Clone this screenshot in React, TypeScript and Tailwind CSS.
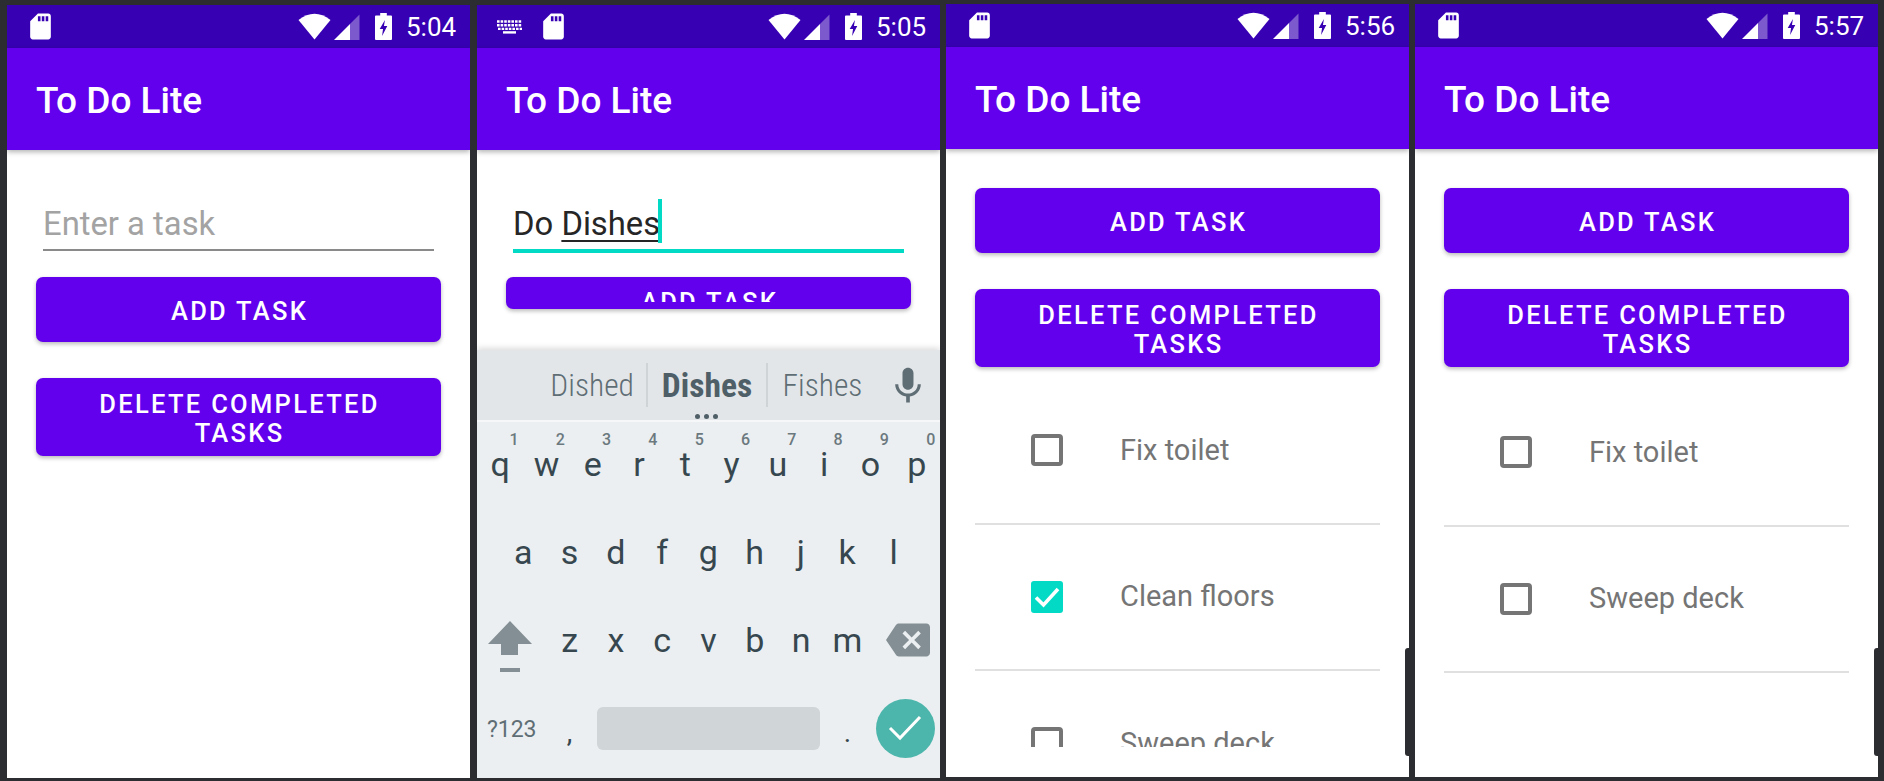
import React from "react";

function SdIcon() {
  return (
    <svg width="31" height="31" viewBox="0 0 24 24" fill="white">
      <path d="M18 2h-8L4.02 8 4 20c0 1.1.9 2 2 2h12c1.1 0 2-.9 2-2V4c0-1.1-.9-2-2-2zm-6 6h-2V4h2v4zm3 0h-2V4h2v4zm3 0h-2V4h2v4z" />
    </svg>
  );
}

function KeyboardIcon() {
  return (
    <svg width="26" height="14" viewBox="0 0 26 14" fill="none" stroke="white" strokeWidth="2.4">
      <path d="M0 1.5H25" strokeDasharray="2.6 1" />
      <path d="M0 5.2H25" strokeDasharray="2.6 1" />
      <path d="M1 8.9H25" strokeDasharray="2.6 1" />
      <path d="M6 12.4H19" />
    </svg>
  );
}

function StatusBar({ time, keyboard }: { time: string; keyboard?: boolean }) {
  return (
    <div className="flex h-[43px] shrink-0 items-center bg-[#3700b3] text-white">
      {keyboard ? (
        <div className="ml-[20px] mr-[15px]">
          <KeyboardIcon />
        </div>
      ) : (
        <div className="w-[18px]" />
      )}
      <SdIcon />
      <div className="flex-1" />
      <svg width="33" height="27" viewBox="0 0 33 27" fill="white">
        <path d="M16.5 26.5 L0.5 7 Q16.5 -5.5 32.5 7 Z" />
      </svg>
      <svg className="ml-[3px]" width="26" height="26" viewBox="0 0 26 26">
        <path d="M0 26 L16 10 V26 Z" fill="white" />
        <path d="M16 10 L25.5 0.5 V26 H16 Z" fill="white" opacity="0.35" />
      </svg>
      <svg className="ml-[15px]" width="17" height="27" viewBox="0 0 18 27" preserveAspectRatio="none">
        <path d="M5.5 0h7v2.5H17a1 1 0 0 1 1 1V26a1 1 0 0 1-1 1H1a1 1 0 0 1-1-1V3.5a1 1 0 0 1 1-1h4.5z" fill="white" />
        <path d="M10.5 7 L5 16 H8.5 L7.5 23 L13 13 H9.5 Z" fill="#3700b3" />
      </svg>
      <span className="ml-[14px] mr-[15px] w-[49px] text-[26px] leading-none whitespace-nowrap">{time}</span>
    </div>
  );
}

function AppBar() {
  return (
    <div className="relative z-10 flex h-[102px] shrink-0 items-center bg-[#6200ee] pl-[29px] pt-[4px] text-[37px] font-medium text-white shadow-[0_2px_5px_rgba(0,0,0,0.3)]">
      To Do Lite
    </div>
  );
}

function PurpleButton({ children }: { children: React.ReactNode }) {
  return (
    <div className="flex min-h-[65px] items-center justify-center rounded-[7px] bg-[#6200ee] pt-[12px] pr-[39px] pb-[8px] pl-[41px] text-center text-[25.5px] leading-[29px] font-medium tracking-[0.09em] text-white shadow-[0_2px_4px_rgba(0,0,0,0.28)]">
      {children}
    </div>
  );
}

function TaskRow({ label, done }: { label: string; done?: boolean }) {
  return (
    <div className="flex h-[146.5px] shrink-0 items-center border-b-2 border-[#e0e0e0] pl-[56px]">
      {done ? (
        <div className="flex h-[32px] w-[32px] items-center justify-center rounded-[3px] bg-[#03dac5]">
          <svg width="26" height="22" viewBox="0 0 26 22" fill="none" stroke="white" strokeWidth="3.6">
            <path d="M2 11.5 L9.5 19 L24 3" />
          </svg>
        </div>
      ) : (
        <div className="h-[32px] w-[32px] rounded-[4px] border-4 border-[#757575]" />
      )}
      <span className="ml-[57px] text-[29px] text-[#757575]">{label}</span>
    </div>
  );
}

const Row1 = ["q", "w", "e", "r", "t", "y", "u", "i", "o", "p"];
const Hints = ["1", "2", "3", "4", "5", "6", "7", "8", "9", "0"];
const Row2 = ["a", "s", "d", "f", "g", "h", "j", "k", "l"];
const Row3 = ["z", "x", "c", "v", "b", "n", "m"];

function Key({ label, hint }: { label: string; hint?: string }) {
  return (
    <div className="relative flex h-[88px] w-[46.3px] shrink-0 items-center justify-center text-[34px] text-[#37474f]">
      {hint && (
        <span className="absolute top-[12px] left-[32px] w-[10px] text-center text-[16px] leading-4 font-medium text-[#6b797f]">
          {hint}
        </span>
      )}
      {label}
    </div>
  );
}

function Keyboard() {
  return (
    <div className="relative z-10 h-[428px] shrink-0 bg-[#eceff1] shadow-[0_-2px_6px_rgba(0,0,0,0.14)]">
      <div className="relative flex h-[72px] items-center border-b-2 border-[#f6f7f8] bg-[#e3e6e9] text-[33.5px] text-[#5f6e75]">
        <div className="flex h-[44px] w-[171px] items-center justify-end border-r-2 border-[#cfd4d7] pr-[12px]">
          <span className="inline-block pt-[2px] text-[31.5px] font-light [font-stretch:75%]">Dished</span>
        </div>
        <div className="flex h-[44px] w-[120px] items-center justify-center border-r-2 border-[#cfd4d7] font-bold text-[#4f5f67]">
          <span className="inline-block pt-[2px] [font-stretch:75%]">Dishes</span>
        </div>
        <div className="flex h-[44px] w-[115px] items-center justify-center">
          <span className="inline-block pt-[2px] pr-[6px] text-[31.5px] font-light [font-stretch:75%]">Fishes</span>
        </div>
        <svg className="ml-[3px] mt-[1px]" width="44" height="44" viewBox="0 0 24 24" fill="#5f6e75">
          <path d="M12 14c1.66 0 2.99-1.34 2.99-3L15 5c0-1.66-1.34-3-3-3S9 3.34 9 5v6c0 1.66 1.34 3 3 3zm5.3-3c0 3-2.54 5.1-5.3 5.1S6.7 14 6.7 11H5c0 3.41 2.72 6.23 6 6.72V21h2v-3.28c3.28-.48 6-3.3 6-6.72h-1.7z" />
        </svg>
        <div className="absolute bottom-[1px] left-[218px] flex gap-[4px]">
          <div className="h-[5px] w-[5px] rounded-full bg-[#4f5f67]" />
          <div className="h-[5px] w-[5px] rounded-full bg-[#4f5f67]" />
          <div className="h-[5px] w-[5px] rounded-full bg-[#4f5f67]" />
        </div>
      </div>
      <div className="mt-[-2px] flex">
        {Row1.map((k, i) => (
          <Key key={k} label={k} hint={Hints[i]} />
        ))}
      </div>
      <div className="flex pl-[23px]">
        {Row2.map((k) => (
          <Key key={k} label={k} />
        ))}
      </div>
      <div className="flex">
        <div className="flex h-[88px] w-[69.45px] shrink-0 flex-col items-center justify-center gap-[12px] pt-[12px] pr-[4px]">
          <svg width="44" height="35" viewBox="0 0 44 35" fill="#838f94">
            <path d="M22 0 L44 23 H30 V34 H13 V23 H0 Z" />
          </svg>
          <div className="h-[4px] w-[20px] bg-[#838f94]" />
        </div>
        {Row3.map((k) => (
          <Key key={k} label={k} />
        ))}
        <div className="flex h-[88px] w-[69.45px] shrink-0 items-center justify-center">
          <svg className="ml-[6px]" width="44" height="44" viewBox="0 0 24 24" fill="#838f94">
            <path d="M22 3H7c-.69 0-1.23.35-1.59.88L0 12l5.41 8.11c.36.53.9.89 1.59.89h15c1.1 0 2-.9 2-2V5c0-1.1-.9-2-2-2zm-3 12.59L17.59 17 14 13.41 10.41 17 9 15.59 12.59 12 9 8.41 10.41 7 14 10.59 17.59 7 19 8.41 15.41 12 19 15.59z" />
          </svg>
        </div>
      </div>
      <div className="flex h-[88px] items-center text-[#5f6e75]">
        <div className="w-[69.45px] shrink-0 pt-[4px] text-center text-[23px]">?123</div>
        <div className="w-[46.3px] shrink-0 pt-[10px] text-center text-[28px] text-[#37474f]">,</div>
        <div className="mx-[4px] h-[43px] w-[223.5px] shrink-0 rounded-[6px] bg-[#d0d5d8]" />
        <div className="w-[46.3px] shrink-0 pt-[10px] text-center text-[28px] text-[#37474f]">.</div>
        <div className="flex w-[69.45px] shrink-0 justify-center">
          <div className="flex h-[59px] w-[59px] items-center justify-center rounded-full bg-[#4db6ac]">
            <svg width="34" height="26" viewBox="0 0 34 26" fill="none" stroke="white" strokeWidth="3">
              <path d="M2 13 L12 23 L32 2" />
            </svg>
          </div>
        </div>
      </div>
    </div>
  );
}

function FirstPhone() {
  return (
    <div className="ml-[7px] mt-[5px] flex h-[773px] w-[463px] flex-col overflow-hidden bg-white">
      <StatusBar time="5:04" />
      <AppBar />
      <div className="px-[29px] pt-[46px]">
        <div className="mx-[7px] h-[55px] border-b-2 border-[#8a8a8a] text-[32.8px] leading-[57px] text-[#a3a3a3]">
          Enter a task
        </div>
        <div className="mt-[26px]">
          <PurpleButton>ADD TASK</PurpleButton>
        </div>
        <div className="mt-[36px]">
          <PurpleButton>DELETE COMPLETED TASKS</PurpleButton>
        </div>
      </div>
    </div>
  );
}

function SecondPhone() {
  return (
    <div className="ml-[7px] mt-[5px] flex h-[773px] w-[463px] flex-col overflow-hidden bg-white">
      <StatusBar time="5:05" keyboard />
      <AppBar />
      <div className="flex-1 px-[29px] pt-[46px]">
        <div className="relative mx-[7px] h-[57px] border-b-4 border-[#03dac5] text-[32.8px] leading-[57px] text-[#262626]">
          Do <span className="underline decoration-2 underline-offset-[5px]">Dishes</span>
          <span className="absolute top-[3px] left-[145px] h-[44px] w-[4px] bg-[#03dac5]" />
        </div>
        <div className="mt-[24px] h-[32px] rounded-[7px] bg-[#6200ee] pl-[2px] text-center text-[25.5px] font-medium tracking-[0.09em] text-white shadow-[0_2px_4px_rgba(0,0,0,0.28)]">
          <div className="h-[25px] overflow-hidden pt-[11px] leading-[29px]">ADD TASK</div>
        </div>
      </div>
      <Keyboard />
    </div>
  );
}

function ThirdPhone() {
  return (
    <div className="relative ml-[6px] mt-[4px] flex h-[773px] w-[463px] flex-col overflow-hidden bg-white">
      <StatusBar time="5:56" />
      <AppBar />
      <div className="px-[29px] pt-[39px]">
        <PurpleButton>ADD TASK</PurpleButton>
        <div className="mt-[36px]">
          <PurpleButton>DELETE COMPLETED TASKS</PurpleButton>
        </div>
        <div className="mt-[11px] flex h-[369px] flex-col overflow-hidden">
          <TaskRow label="Fix toilet" />
          <TaskRow label="Clean floors" done />
          <TaskRow label="Sweep deck" />
        </div>
      </div>
      <div className="absolute top-[644px] right-0 h-[108px] w-[4px] rounded-l-[3px] bg-[#2c2d31]" />
    </div>
  );
}

function FourthPhone() {
  return (
    <div className="relative ml-[6px] mt-[4px] flex h-[773px] w-[463px] flex-col overflow-hidden bg-white">
      <StatusBar time="5:57" />
      <AppBar />
      <div className="px-[29px] pt-[39px]">
        <PurpleButton>ADD TASK</PurpleButton>
        <div className="mt-[36px]">
          <PurpleButton>DELETE COMPLETED TASKS</PurpleButton>
        </div>
        <div className="mt-[13px] flex flex-col">
          <TaskRow label="Fix toilet" />
          <TaskRow label="Sweep deck" />
        </div>
      </div>
      <div className="absolute top-[644px] right-0 h-[108px] w-[4px] rounded-l-[3px] bg-[#2c2d31]" />
    </div>
  );
}

export default function App() {
  return (
    <div className="flex h-[781px] w-[1884px] items-start overflow-hidden bg-[#2c2d31] font-[Roboto,sans-serif]">
      <FirstPhone />
      <SecondPhone />
      <ThirdPhone />
      <FourthPhone />
    </div>
  );
}
